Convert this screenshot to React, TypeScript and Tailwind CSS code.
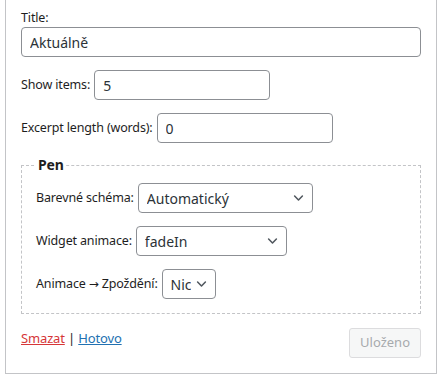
import { ChangeEvent, useState } from 'react';

const font = { fontFamily: '"Noto Sans", "Liberation Sans", sans-serif' };

function Chevron() {
    return (
        <svg
            className="pointer-events-none absolute right-[8px] top-1/2 -translate-y-1/2 w-[13px] h-[13px] text-[#50575e]"
            viewBox="0 0 20 20"
            fill="none"
            stroke="currentColor"
            strokeWidth={2.4}
            strokeLinecap="round"
            strokeLinejoin="round"
        >
            <path d="M4 7l6 6 6-6" />
        </svg>
    );
}

interface SelectProps {
    value: string;
    options: string[];
    width: string;
    onChange: (v: string) => void;
}

function Select({ value, options, width, onChange }: SelectProps) {
    return (
        <div className={`relative ${width}`}>
            <select
                value={value}
                onChange={(e: ChangeEvent<HTMLSelectElement>) => onChange(e.target.value)}
                className="appearance-none w-full h-[30px] pl-[8px] pr-[24px] border border-[#8c8f94] rounded-[4px] bg-white text-[14px] tracking-normal text-[#2c3338] outline-none"
            >
                {options.map((o) => (
                    <option key={o}>{o}</option>
                ))}
            </select>
            <Chevron />
        </div>
    );
}

export default function App() {
    const [title, setTitle] = useState('Aktuálně');
    const [items, setItems] = useState('5');
    const [excerpt, setExcerpt] = useState('0');
    const [scheme, setScheme] = useState('Automatický');
    const [anim, setAnim] = useState('fadeIn');
    const [delay, setDelay] = useState('Nic');

    const inputCls =
        'h-[30px] px-[8px] border border-[#8c8f94] rounded-[4px] bg-white text-[14px] tracking-normal text-[#2c3338] outline-none';

    return (
        <div className="bg-white min-h-[380px]" style={font}>
            <div className="ml-[5px] w-[432px] border border-t-0 border-[#c3c4c7] px-[15px] pb-[15px] text-[12.5px] tracking-[-0.15px] text-[#1e1e1e]">
                {/* Title */}
                <div className="pt-[9px]">
                    <label className="block leading-[18px]">Title:</label>
                    <input
                        value={title}
                        onChange={(e) => setTitle(e.target.value)}
                        className={`${inputCls} block w-full`}
                    />
                </div>

                {/* Show items */}
                <div className="mt-[13px] flex items-center gap-[4px]">
                    <label>Show items:</label>
                    <input value={items} onChange={(e) => setItems(e.target.value)} className={`${inputCls} w-[176px]`} />
                </div>

                {/* Excerpt length */}
                <div className="mt-[13px] flex items-center gap-[4px]">
                    <label>Excerpt length (words):</label>
                    <input value={excerpt} onChange={(e) => setExcerpt(e.target.value)} className={`${inputCls} w-[176px]`} />
                </div>

                {/* Pen settings */}
                <fieldset className="mt-[13px] border border-dashed border-[#c3c4c7] px-[14px] pb-[14px]">
                    <legend className="px-[2px] text-[14px] font-bold leading-[18px]">Pen</legend>
                    <div className="mt-[9px] flex items-center gap-[4px]">
                        <label>Barevné schéma:</label>
                        <Select value={scheme} options={['Automatický', 'Světlé', 'Tmavé']} width="w-[175px]" onChange={setScheme} />
                    </div>
                    <div className="mt-[13px] flex items-center gap-[4px]">
                        <label>Widget animace:</label>
                        <Select value={anim} options={['fadeIn', 'slideIn', 'Nic']} width="w-[151px]" onChange={setAnim} />
                    </div>
                    <div className="mt-[13px] flex items-center gap-[4px]">
                        <label>
                            Animace <span style={{ fontFamily: '"DejaVu Sans", sans-serif' }} className="text-[12px]">→</span> Zpoždění:
                        </label>
                        <Select value={delay} options={['Nic', '100ms', '200ms']} width="w-[54px]" onChange={setDelay} />
                    </div>
                </fieldset>

                {/* Actions */}
                <div className="mt-[14px] flex items-start justify-between">
                    <div className="mt-[1px] leading-[18px] text-[13px]">
                        <a href="#" className="text-[#d63638] underline">Smazat</a>
                        <span className="text-[#1e1e1e]"> | </span>
                        <a href="#" className="text-[#2271b1] underline">Hotovo</a>
                    </div>
                    <button
                        disabled
                        className="h-[30px] px-[10px] border border-[#dcdcde] rounded-[3px] bg-[#f6f7f7] text-[#a7aaad] text-[13px] tracking-normal"
                    >
                        Uloženo
                    </button>
                </div>
            </div>
        </div>
    );
}
